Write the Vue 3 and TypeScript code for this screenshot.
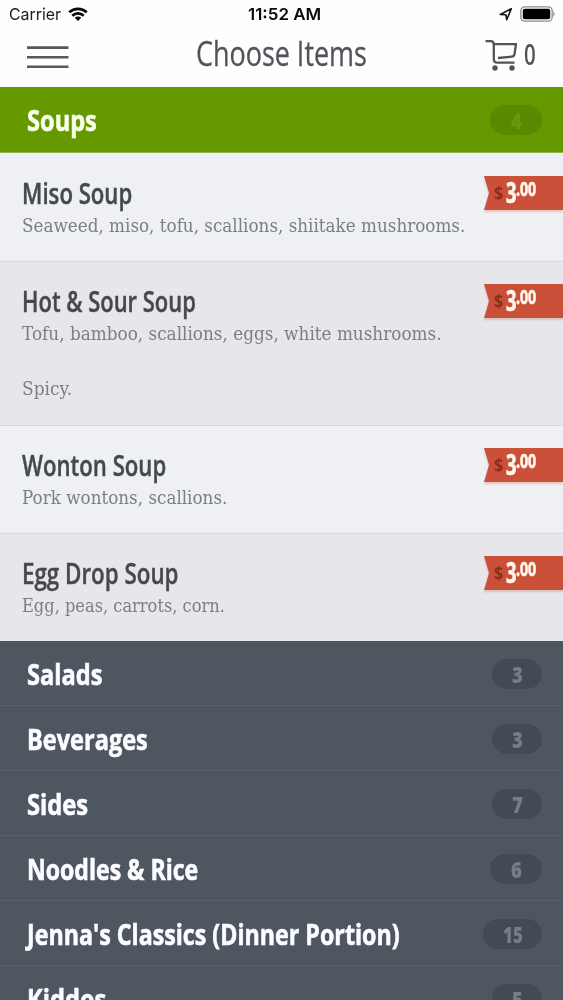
<script setup lang="ts">
interface MenuItem {
  name: string
  width: number
  lines: { text: string; width: number }[]
}
interface Section {
  name: string
  width: number
  count: number
  badge: number
}

const items: MenuItem[] = [
  { name: 'Miso Soup', width: 110, lines: [{ text: 'Seaweed, miso, tofu, scallions, shiitake mushrooms.', width: 443 }] },
  {
    name: 'Hot & Sour Soup',
    width: 174,
    lines: [
      { text: 'Tofu, bamboo, scallions, eggs, white mushrooms.', width: 419.5 },
      { text: '', width: 0 },
      { text: 'Spicy.', width: 50 },
    ],
  },
  { name: 'Wonton Soup', width: 144, lines: [{ text: 'Pork wontons, scallions.', width: 205 }] },
  { name: 'Egg Drop Soup', width: 156.5, lines: [{ text: 'Egg, peas, carrots, corn.', width: 203 }] },
]

const sections: Section[] = [
  { name: 'Salads', width: 75, count: 3, badge: 50 },
  { name: 'Beverages', width: 121, count: 3, badge: 50 },
  { name: 'Sides', width: 61, count: 7, badge: 50 },
  { name: 'Noodles & Rice', width: 171.5, count: 6, badge: 52 },
  { name: "Jenna's Classics (Dinner Portion)", width: 372.5, count: 15, badge: 59 },
  { name: 'Kiddos', width: 79.5, count: 5, badge: 50 },
]

// Condenses a label horizontally to the given width.
const vFit = {
  mounted(el: HTMLElement, binding: { value: number }) {
    const natural = el.offsetWidth
    if (natural > 0 && binding.value > 0) {
      el.style.transform = `scaleX(${binding.value / natural})`
      el.style.marginRight = `${binding.value - natural}px`
    }
  },
}
</script>

<template>
  <main class="screen">
    <header class="top">
      <div class="status">
        <div class="carrier">
          <span v-fit="52" class="fit">Carrier</span>
          <svg width="20" height="15" viewBox="0 0 20 15">
            <g fill="none" stroke="#080808" stroke-width="2.700">
              <path d="M1.2 5.3C6.2.6 13.800.6 18.800 5.300" />
              <path d="M4.300 8.700C7.600 5.700 12.400 5.700 15.700 8.700" />
            </g>
            <path d="M6.700 10.800Q10 8 13.300 10.800L10 14Z" fill="#080808" />
          </svg>
        </div>
        <span v-fit="73" class="fit time">11:52 AM</span>
        <div class="power">
          <svg width="14" height="14" viewBox="0 0 14 14">
            <path d="M1.300 7.500L12.300 1.600L7.700 12.700L6.900 7.700Z" fill="none" stroke="#111" stroke-width="1.600" stroke-linejoin="round" />
          </svg>
          <svg width="36" height="16" viewBox="0 0 36 16">
            <rect x=".8" y=".8" width="31.400" height="14.400" rx="4" fill="none" stroke="#8c8c8c" stroke-width="1.300" />
            <rect x="2.800" y="2.800" width="27.400" height="10.400" rx="2" fill="#000" />
            <path d="M33.500 5.300Q35.600 8 33.500 10.700Z" fill="#777" />
          </svg>
        </div>
      </div>
      <nav class="nav">
        <svg class="burger" width="42" height="24" viewBox="0 0 42 24">
          <path d="M0 2.600H41.500M0 12.200H41.500M0 21.700H41.500" stroke="#55585c" stroke-width="2.600" />
        </svg>
        <h1><span v-fit="171" class="fit">Choose Items</span></h1>
        <div class="cart">
          <svg width="34" height="32" viewBox="0 0 34 32">
            <g fill="none" stroke="#505459" stroke-width="2.300" stroke-linejoin="round">
              <path d="M.5 2.200H5.500Q8.800 2.200 8.800 5.500V20Q8.800 23.700 12.500 23.700H29.500" />
              <path d="M8.800 5.200H31L29.500 15Q29.200 17.400 26.800 17.600L13 19" />
            </g>
            <circle cx="10" cy="29" r="2.700" fill="#505459" />
            <circle cx="27" cy="29" r="2.700" fill="#505459" />
          </svg>
          <span v-fit="12" class="fit total">0</span>
        </div>
      </nav>
    </header>

    <section class="row active">
      <span v-fit="70" class="fit">Soups</span>
      <div class="badge-wrap"><b class="badge wide"><span v-fit="11" class="fit">4</span></b></div>
    </section>

    <article v-for="item in items" :key="item.name" class="item">
      <div class="copy">
        <h2><span v-fit="item.width" class="fit">{{ item.name }}</span></h2>
        <p v-for="(line, i) in item.lines" :key="i"><span v-fit="line.width" class="fit">{{ line.text }}</span></p>
      </div>
      <div class="ribbon-shadow">
        <div class="ribbon">
          <span v-fit="9" class="fit dollar">$</span>
          <span v-fit="10.5" class="fit whole">3</span>
          <span v-fit="20.5" class="fit cents">.00</span>
        </div>
      </div>
    </article>

    <section v-for="s in sections" :key="s.name" class="row">
      <span v-fit="s.width" class="fit">{{ s.name }}</span>
      <div class="badge-wrap">
        <b class="badge" :style="{ width: s.badge + 'px' }"><span v-fit="s.count > 9 ? 20 : 11" class="fit">{{ s.count }}</span></b>
      </div>
    </section>
  </main>
</template>

<style>
html,
body {
  margin: 0;
  overflow: hidden;
}
</style>

<style scoped>
.screen {
  width: 563px;
  height: 1000px;
  overflow: hidden;
  background: #4e5660;
  font-family: 'Open Sans', 'Noto Sans', sans-serif;
}
.fit {
  display: inline-block;
  flex: none;
  white-space: nowrap;
  transform-origin: 0 50%;
}
.top {
  height: 87px;
  background: #fefefe;
}
.status {
  display: grid;
  grid-template-columns: 248px 1fr auto;
  align-items: center;
  height: 28px;
  font: 16.500px/28px Inter, 'Liberation Sans', sans-serif;
  color: #1c1c1c;
}
.carrier {
  display: flex;
  align-items: center;
  gap: 7px;
  padding-left: 9px;
}
.time {
  font-weight: 600;
  color: #0a0a0a;
  justify-self: start;
}
.power {
  display: flex;
  align-items: center;
  gap: 7px;
  padding-right: 7px;
}
.nav {
  display: grid;
  grid-template-columns: 196px 1fr auto;
  height: 59px;
  color: #505459;
}
.burger {
  margin: 17px 0 0 27px;
}
h1 {
  margin: 0;
  font-size: 34.500px;
  line-height: 50px;
  font-weight: 400;
  -webkit-text-stroke: 0.3px;
}
.cart {
  display: flex;
  gap: 5px;
  padding: 11px 27px 0 0;
}
.total {
  font-size: 29px;
  line-height: 29px;
  height: 29px;
  font-weight: 600;
}
.row {
  box-sizing: border-box;
  display: flex;
  align-items: center;
  justify-content: space-between;
  height: 65.100px;
  padding: 1px 21px 0 27px;
  border-bottom: 1px solid #58616b;
  color: #fafcff;
  font-size: 28px;
  font-weight: 700;
  line-height: 64px;
  -webkit-text-stroke: 0.6px;
}
.row.active {
  height: 66px;
  padding-top: 0;
  background: #659900;
  border-color: #8fb44b;
  color: #faffea;
}
.badge {
  display: flex;
  align-items: center;
  justify-content: center;
  width: 50px;
  height: 30px;
  border-radius: 15px;
  background: #434a55;
  color: #767d89;
  font-size: 22px;
  line-height: 30px;
  -webkit-text-stroke: 0;
}
.badge.wide {
  width: 52px;
}
.active .badge {
  background: #588900;
  color: #669b0b;
}
.item {
  box-sizing: border-box;
  display: flex;
  justify-content: space-between;
  min-height: 108px;
  padding: 22px 0 0 22px;
  background: #e7e7eb;
  border-top: 1px solid #d5d7db;
}
.item:nth-of-type(odd) {
  background: #eef0f3;
}
.item:nth-of-type(1) {
  border-top-color: #eef0f3;
}
.item:nth-of-type(2) {
  height: 164px;
}
h2 {
  margin: 0 0 2px;
  font-size: 28px;
  line-height: 34px;
  font-weight: 600;
  color: #45494e;
  -webkit-text-stroke: 0.4px;
}
p {
  margin: 0;
  height: 27.500px;
  font: 18px/27.500px 'DejaVu Serif', serif;
  color: #7b7f85;
}
.copy {
  width: 450px;
}
.ribbon-shadow {
  height: 34px;
  filter: drop-shadow(0 2px 1px rgba(185, 120, 100, 0.35));
}
.ribbon {
  box-sizing: border-box;
  display: flex;
  width: 79px;
  height: 34px;
  padding-left: 10px;
  background: #cb5039;
  clip-path: polygon(0 0, 100% 0, 100% 100%, 0 100%, 5px 50%);
  color: #fff7ec;
  font-weight: 700;
  -webkit-text-stroke: 0.7px;
}
.dollar {
  margin-top: 1px;
  color: #8d2d18;
  font-size: 18px;
  line-height: 32px;
  -webkit-text-stroke: 0;
}
.whole {
  margin-left: 3px;
  font-size: 28px;
  line-height: 32px;
}
.cents {
  margin-left: -1px;
  font-size: 20px;
  line-height: 25px;
}
</style>
